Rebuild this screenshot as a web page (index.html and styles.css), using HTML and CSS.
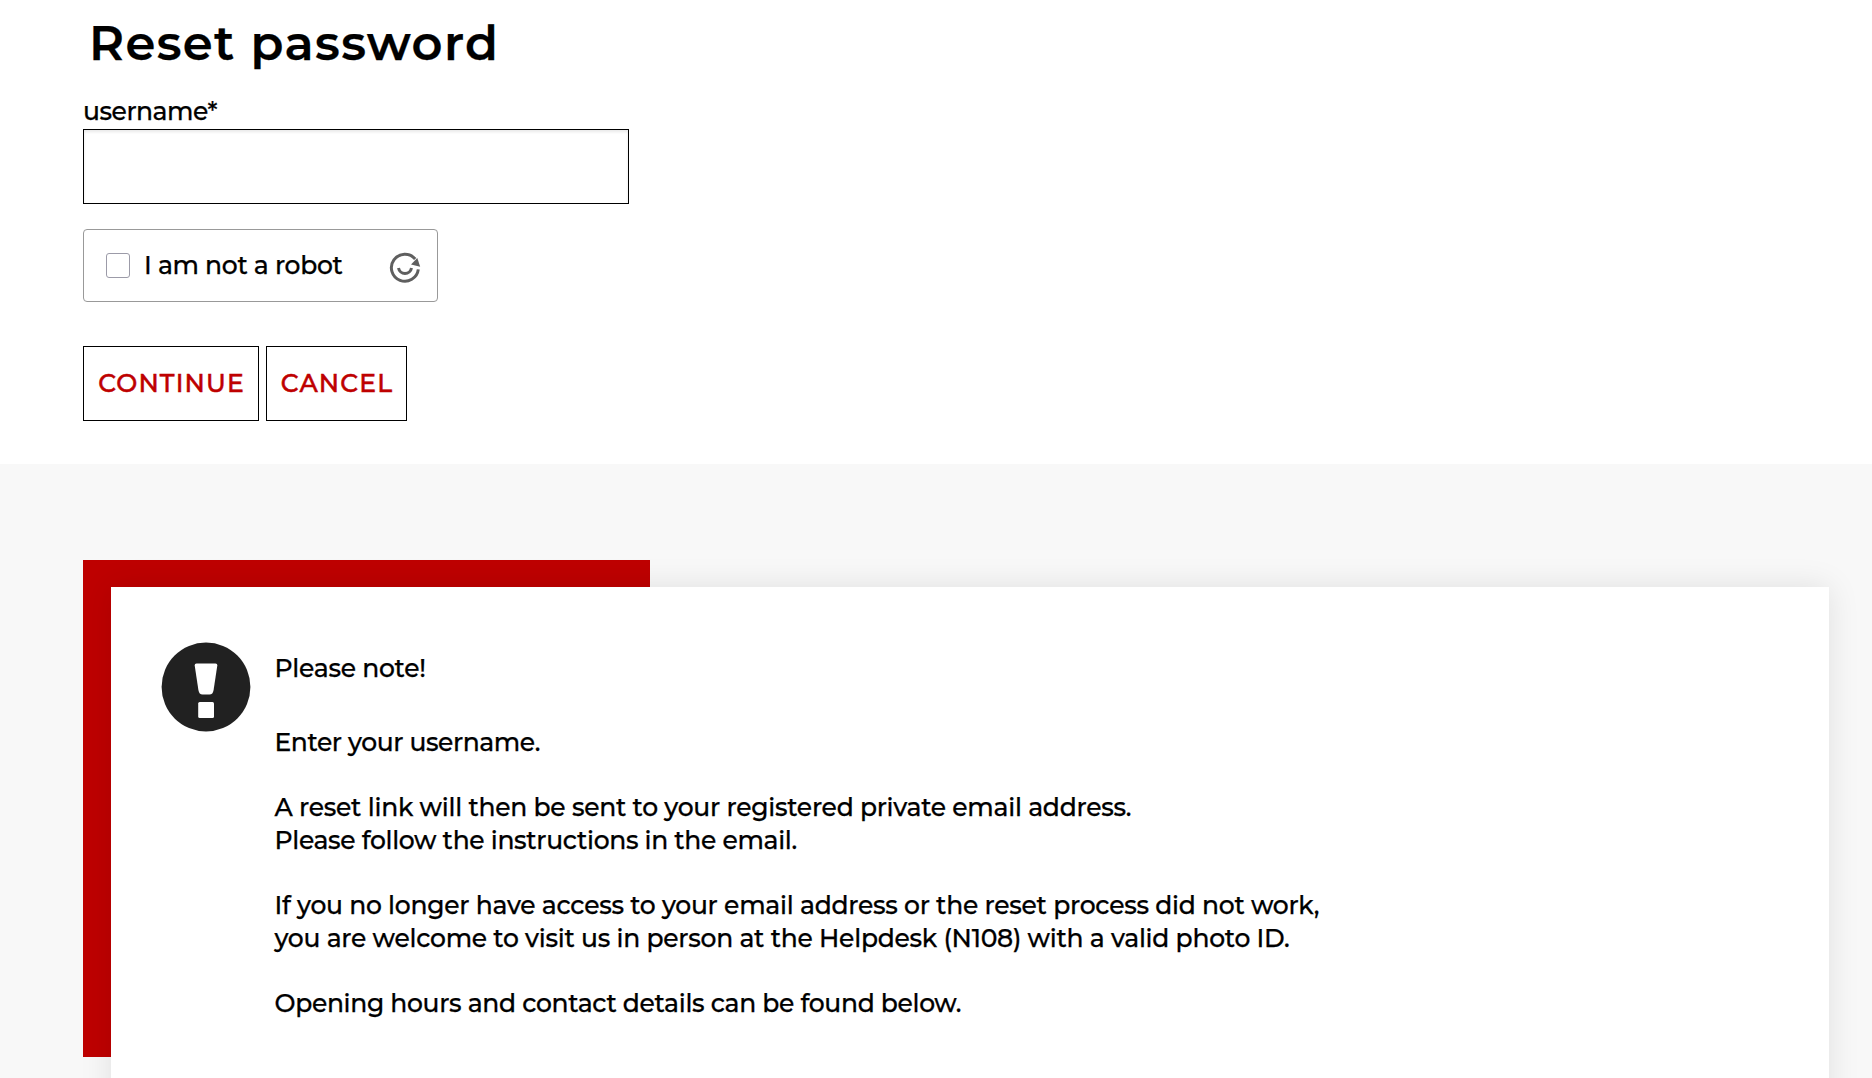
FILE: index.html
```
<!DOCTYPE html>
<html lang="en">
<head>
<meta charset="utf-8">
<title>Reset password</title>
<link rel="stylesheet" href="styles.css">
</head>
<body>
<main class="reset">
  <h1 class="title">Reset password</h1>
  <form class="form">
    <label class="label" for="username">username*</label>
    <input class="input" id="username" type="text">
    <div class="captcha">
      <span class="checkbox" role="checkbox" aria-checked="false" tabindex="0"></span>
      <span class="captcha-text">I am not a robot</span>
      <svg class="captcha-logo" viewBox="0 0 32 32" aria-hidden="true">
        <path d="M29.300 17.400A13.500 13.500 0 1 1 26.200 7" fill="none" stroke="#5f5f5f" stroke-width="3"/>
        <path d="M28.300 6 31.200 14.800 22 12.600Z" fill="#5f5f5f"/>
        <path d="M9.500 16A6.600 6.600 0 0 0 22.500 16" fill="none" stroke="#5f5f5f" stroke-width="3"/>
      </svg>
    </div>
    <div class="actions">
      <button class="button" type="button">CONTINUE</button>
      <button class="button cancel" type="button">CANCEL</button>
    </div>
  </form>
</main>
<section class="notice">
  <div class="accent"></div>
  <div class="card">
    <svg class="alert" viewBox="0 0 90 90" aria-hidden="true">
      <circle cx="45" cy="45" r="44.4" fill="#212121"/>
      <path d="M35.500 21.500H54.500Q56.500 21.500 56.300 23.500L52.600 48Q51.900 52.600 48.500 52.600H41.500Q38.100 52.600 37.400 48L33.700 23.500Q33.500 21.500 35.500 21.500Z" fill="#fff"/>
      <rect x="37.200" y="60" width="15.800" height="16" rx="1.500" fill="#fff"/>
    </svg>
    <div class="message">
      <p class="lead">Please note!</p>
      <p class="tight">Enter your username.</p>
      <p>A reset link will then be sent to your registered private email address.<br><span class="snug">Please follow the instructions in the email.</span></p>
      <p>If you no longer have access to your email address or the reset process did not work,<br>you are welcome to visit us in person at the Helpdesk (N108) with a valid photo ID.</p>
      <p class="snug">Opening hours and contact details can be found below.</p>
    </div>
  </div>
</section>
</body>
</html>
```
FILE: styles.css
```
* { box-sizing: border-box; }
body {
  margin: 0;
  height: 1078px;
  overflow: hidden;
  background: #fff;
  color: #000;
  font: 500 25px/32.7px Montserrat, Inter, sans-serif;
  letter-spacing: -0.25px;
  -webkit-text-stroke: 0.25px currentColor;
}
.reset { height: 464px; padding: 12px 83px 0; }
.title {
  margin: 0 0 0 6px;
  font-size: 48px;
  line-height: 62px;
  font-weight: 600;
  letter-spacing: 1.4px;
  white-space: nowrap;
}
.form { display: flex; flex-direction: column; align-items: flex-start; }
.label { margin-top: 21px; height: 34px; letter-spacing: -0.45px; }
.input {
  width: 546px;
  height: 75px;
  padding: 0 16px;
  border: 1px solid #000;
  border-radius: 0;
  font: inherit;
  box-shadow: inset 0 2px 3px rgba(0, 0, 0, .09);
  outline: 0;
}
.captcha {
  display: flex;
  align-items: center;
  width: 355px;
  height: 73px;
  margin-top: 25px;
  padding: 0 16px 0 22px;
  border: 1px solid #999;
  border-radius: 4px;
}
.checkbox { width: 24px; height: 25px; border: 1px solid #9c9ba8; border-radius: 3px; }
.captcha-text { margin: 0 0 1px 14px; white-space: nowrap; letter-spacing: -0.3px; }
.captcha-logo { width: 32px; height: 32px; margin: 4px 0 0 auto; }
.actions { display: flex; gap: 7px; margin-top: 44px; }
.button {
  width: 176px;
  height: 75px;
  padding: 0 0 2px 1px;
  border: 1px solid #000;
  background: #fff;
  color: #be0000;
  font: 500 25px/32px Montserrat, Inter, sans-serif;
  letter-spacing: 1.15px;
  -webkit-text-stroke: 0.5px currentColor;
}
.cancel { width: 141px; }
.notice {
  display: grid;
  height: 614px;
  padding: 96px 43px 0 83px;
  background: #f8f8f8;
}
.accent { grid-area: 1 / 1; width: 567px; height: 497px; background: #be0000; }
.card {
  grid-area: 1 / 1;
  display: flex;
  align-items: flex-start;
  height: 560px;
  margin: 27px 0 0 28px;
  padding: 55px 50px 0;
  background: #fff;
  box-shadow: 0 0 30px rgba(0, 0, 0, .1);
}
.alert { flex: none; width: 90px; height: 90px; }
.message { margin: 10px 0 0 23.5px; white-space: nowrap; }
.message p { margin: 0 0 32.7px; }
.message .lead { margin-bottom: 41px; }
.message .tight { letter-spacing: -0.4px; }
.message .snug { letter-spacing: -0.32px; }
```
